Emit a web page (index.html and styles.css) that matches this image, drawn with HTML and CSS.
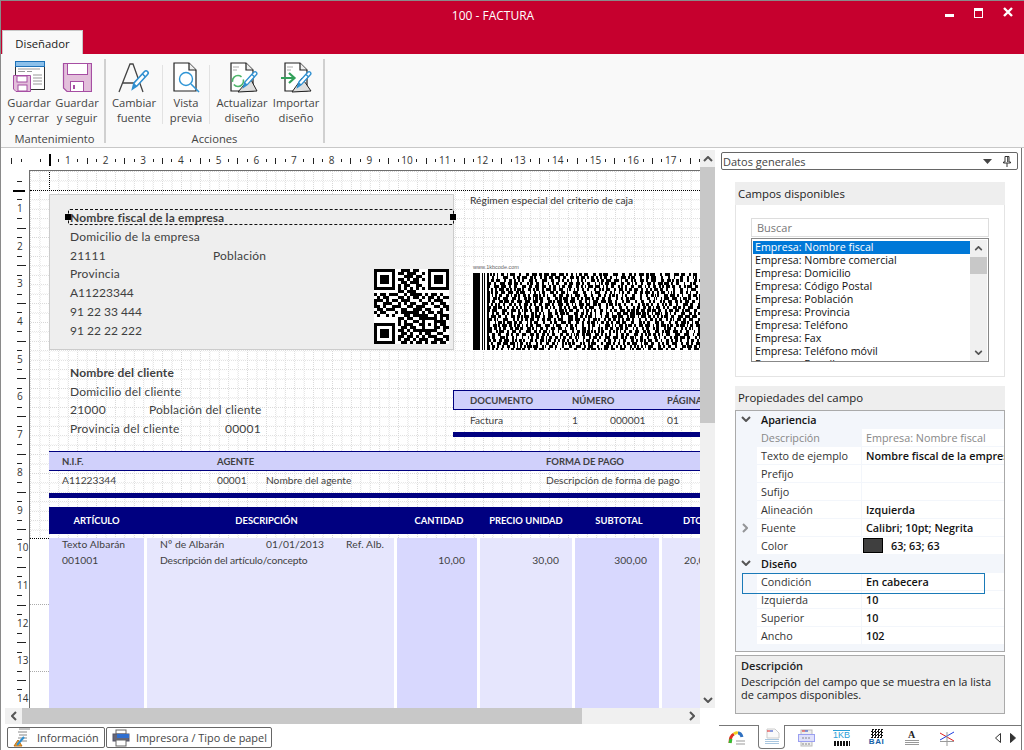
FILE: index.html
```html
<!DOCTYPE html>
<html lang="es">
<head>
<meta charset="utf-8">
<title>100 - FACTURA</title>
<link rel="stylesheet" href="styles.css">
</head>
<body>
<svg class="defs" width="0" height="0" aria-hidden="true">
  <symbol id="pen" viewBox="0 0 20 24">
    <path d="M3 21 L4.5 15 L15 3.5 Q16.5 2 18 3.5 Q19.5 5 18 6.5 L7.5 18 Z" fill="#fff" stroke="#2f8fd0" stroke-width="1.6"/>
    <path d="M13 6 L16 9" stroke="#2f8fd0" stroke-width="1.6"/>
    <path d="M3 21 L4.5 15 L7.5 18 Z" fill="#2f8fd0"/>
  </symbol>
  <symbol id="doc" viewBox="0 0 24 30">
    <path d="M1 1 H16 L23 8 V29 H1 Z" fill="#fff" stroke="#222" stroke-width="1.2"/>
    <path d="M16 1 V8 H23" fill="#eee" stroke="#222" stroke-width="1.2"/>
  </symbol>
  <symbol id="up" viewBox="0 0 10 6"><path d="M1 5 L5 1 L9 5" fill="none" stroke="#555" stroke-width="2"/></symbol>
  <symbol id="down" viewBox="0 0 10 6"><path d="M1 1 L5 5 L9 1" fill="none" stroke="#555" stroke-width="2"/></symbol>
  <symbol id="left" viewBox="0 0 6 10"><path d="M5 1 L1 5 L5 9" fill="none" stroke="#555" stroke-width="2"/></symbol>
  <symbol id="right" viewBox="0 0 6 10"><path d="M1 1 L5 5 L1 9" fill="none" stroke="#555" stroke-width="2"/></symbol>
</svg>

<div class="window">
  <header class="titlebar">
    <div class="title">100 - FACTURA</div>
    <div class="controls">
      <span class="ctl-min"></span>
      <span class="ctl-max"></span>
      <svg class="ctl-close" viewBox="0 0 10 10"><path d="M1 1 L9 9 M9 1 L1 9" stroke="#fff" stroke-width="2.4"/></svg>
    </div>
  </header>
  <div class="tabrow"><div class="tab">Diseñador</div></div>

  <section class="ribbon">
    <div class="group g-mant">
      <div class="buttons">
        <div class="rbtn w48">
          <svg class="ico" width="32" height="32" viewBox="0 0 32 32">
            <rect x="2.500" y=".5" width="29" height="28" fill="#fff" stroke="#333"/>
            <rect x="2.500" y=".5" width="29" height="5" fill="#8cc0ea" stroke="#1f72b8"/>
            <path d="M5 8h22M5 10.500h7M14 10.500h5M20 14h9M20 17h9M20 20h9M20 23h9" stroke="#999"/>
            <path d="M.5 14.500 H17.500 V30.500 H3 L.5 28 Z" fill="#e3bfdb" stroke="#a64ea3"/>
            <rect x="4" y="15" width="10" height="6" fill="#fff" stroke="#a64ea3"/>
            <rect x="5" y="24" width="9" height="6" fill="#fff" stroke="#a64ea3"/>
          </svg>
          <span>Guardar<br>y cerrar</span>
        </div>
        <div class="rbtn w48">
          <svg class="ico" width="30" height="32" viewBox="0 0 30 32">
            <path d="M1.500 2.500 H29.500 V30.500 H5 L1.500 27 Z" fill="#e3bfdb" stroke="#a64ea3" stroke-width="1.2"/>
            <rect x="5.500" y="2.500" width="20" height="11" fill="#fff" stroke="#a64ea3"/>
            <rect x="8.500" y="20.500" width="13" height="10" fill="#fff" stroke="#a64ea3"/>
            <rect x="11" y="24" width="2" height="4" fill="#a64ea3"/>
          </svg>
          <span>Guardar<br>y seguir</span>
        </div>
      </div>
      <div class="glabel">Mantenimiento</div>
    </div>
    <div class="group g-acc">
      <div class="buttons">
        <div class="rbtn w56">
          <svg class="ico" width="36" height="32" viewBox="0 0 36 32">
            <path d="M3 31 L14 3 L17 3 L27 31 M6.500 22 H24" fill="none" stroke="#444" stroke-width="1.3"/>
            <use href="#pen" x="13" y="7" width="21" height="24"/>
          </svg>
          <span>Cambiar<br>fuente</span>
        </div>
        <i class="minisep"></i>
        <div class="rbtn w46">
          <svg class="ico" width="32" height="32" viewBox="0 0 32 32">
            <use href="#doc" x="3" y="1" width="24" height="30"/>
            <circle cx="16" cy="18" r="6.500" fill="#fff" stroke="#2f95d6" stroke-width="1.400"/>
            <path d="M21 23 L29 31" stroke="#2f95d6" stroke-width="1.600"/>
          </svg>
          <span>Vista<br>previa</span>
        </div>
        <i class="minisep"></i>
        <div class="rbtn w62">
          <svg class="ico" width="36" height="32" viewBox="0 0 36 32">
            <use href="#doc" x="6" y="1" width="24" height="30"/>
            <path d="M9 6h6M9 9h4" stroke="#aaa"/>
            <circle cx="14" cy="20" r="5.500" fill="none" stroke="#4fb56b" stroke-width="1.600" stroke-dasharray="13 3"/>
            <path d="M14 31 L26 17 L33 30 Z" fill="#ddd" stroke="#222"/>
            <use href="#pen" x="17" y="8" width="17" height="21"/>
          </svg>
          <span>Actualizar<br>diseño</span>
        </div>
        <div class="rbtn w46">
          <svg class="ico" width="36" height="32" viewBox="0 0 36 32">
            <use href="#doc" x="6" y="1" width="24" height="30"/>
            <path d="M9 6h6M9 9h4" stroke="#aaa"/>
            <path d="M14 31 L24 17 L33 30 Z" fill="#ddd" stroke="#222"/>
            <path d="M3 17 H15 M11 12 L16.500 17 L11 22" fill="none" stroke="#32a05a" stroke-width="2.200"/>
            <use href="#pen" x="17" y="8" width="17" height="21"/>
          </svg>
          <span>Importar<br>diseño</span>
        </div>
      </div>
      <div class="glabel">Acciones</div>
    </div>
  </section>

  <main class="main">
    <section class="designer">
      <div class="sheet">
        <div class="hruler">
          <div class="hcell"></div>
          <div class="hcell origin">1</div>
          <div class="hcell">2</div><div class="hcell">3</div><div class="hcell">4</div><div class="hcell">5</div>
          <div class="hcell">6</div><div class="hcell">7</div><div class="hcell">8</div><div class="hcell">9</div>
          <div class="hcell">10</div><div class="hcell">11</div><div class="hcell">12</div><div class="hcell">13</div>
          <div class="hcell">14</div><div class="hcell">15</div><div class="hcell">16</div><div class="hcell">17</div>
          <div class="hcell"></div>
        </div>
        <div class="vruler">
          <div class="vcell first"></div>
          <div class="vcell origin">1</div>
          <div class="vcell">2</div><div class="vcell">3</div><div class="vcell">4</div><div class="vcell">5</div>
          <div class="vcell">6</div><div class="vcell">7</div><div class="vcell">8</div><div class="vcell">9</div>
          <div class="vcell">10</div><div class="vcell">11</div><div class="vcell">12</div><div class="vcell">13</div>
          <div class="vcell">14</div>
        </div>
        <div class="canvas">
          <i class="dot-h"></i><i class="dot-v"></i><i class="dot-h2"></i>
          <i class="sparse s1"></i><i class="sparse s2"></i>

          <div class="band company">
            <div class="ln b">Nombre fiscal de la empresa</div>
            <div class="ln">Domicilio de la empresa</div>
            <div class="ln"><span class="cp">21111</span>Población</div>
            <div class="ln">Provincia</div>
            <div class="ln digits">A11223344</div>
            <div class="ln digits">91 22 33 444</div>
            <div class="ln digits">91 22 22 222</div>
          </div>
          <div class="selection"></div>
          <i class="handle h1"></i><i class="handle h2"></i>
          <canvas class="qr" id="qr" width="75" height="75"></canvas>

          <div class="band regimen">Régimen especial del criterio de caja</div>
          <div class="band barcode">
            <div class="bc-url">www.1kbcode.com</div>
            <canvas id="pdf" width="227" height="77"></canvas>
          </div>

          <div class="band client">
            <div class="ln b">Nombre del cliente</div>
            <div class="ln">Domicilio del cliente</div>
            <div class="ln"><span class="cp2">21000</span>Población del cliente</div>
            <div class="ln"><span class="cp3">Provincia del cliente</span>00001</div>
          </div>

          <div class="band docs">
            <div class="headbar docgrid"><span>DOCUMENTO</span><span class="sp2">NÚMERO</span><span>PÁGINA</span></div>
            <div class="rowline docgrid"><span>Factura</span><span>1</span><span>000001</span><span>01</span></div>
            <div class="bar"></div>
          </div>

          <div class="band pay">
            <div class="headbar paygrid"><span>N.I.F.</span><span class="sp2">AGENTE</span><span>FORMA DE PAGO</span></div>
            <div class="rowline paygrid"><span>A11223344</span><span>00001</span><span>Nombre del agente</span><span>Descripción de forma de pago</span></div>
            <div class="bar"></div>
          </div>

          <div class="band lines-head tracks">
            <span>ARTÍCULO</span><span class="adj-d">DESCRIPCIÓN</span><span class="adj-r">CANTIDAD</span><span>PRECIO UNIDAD</span><span class="adj-r">SUBTOTAL</span><span class="adj-dto">DTO</span>
          </div>
          <div class="band lines tracks">
            <div class="col dark"><div class="l1">Texto Albarán</div><div>001001</div></div>
            <div class="col light"><div class="alb l1"><span class="a1">Nº de Albarán</span><span class="a2">01/01/2013</span><span>Ref. Alb.</span></div><div class="tight">Descripción del artículo/concepto</div></div>
            <div class="col dark num n1">10,00</div>
            <div class="col light num n2">30,00</div>
            <div class="col dark num n3">300,00</div>
            <div class="col light num n4">20,00</div>
          </div>
        </div>
      </div>

      <div class="vscroll">
        <div class="sb-btn"><svg width="10" height="6"><use href="#up"/></svg></div>
        <div class="sb-thumb-v"></div>
        <div class="sb-track"></div>
        <div class="sb-btn"><svg width="10" height="6"><use href="#down"/></svg></div>
      </div>

      <div class="hscroll">
        <div class="sb-btn h"><svg width="6" height="10"><use href="#left"/></svg></div>
        <div class="sb-thumb-h"></div>
        <div class="sb-track"></div>
        <div class="sb-btn h"><svg width="6" height="10"><use href="#right"/></svg></div>
      </div>

      <div class="bottombtns">
        <div class="bbtn b-info">
          <svg width="18" height="19" viewBox="0 0 18 19">
            <path d="M6 1 H17 M5 4 H14 M6 7 H14 M5 10 H14 M8 13 H14" stroke="#888"/>
            <path d="M1 18 L5 12 L9 18 Z" fill="#f0a030" stroke="#c07010"/>
            <path d="M4 17 L11 9" stroke="#2f8fd0" stroke-width="2"/>
          </svg>
          Información
        </div>
        <div class="bbtn b-print">
          <svg width="18" height="18" viewBox="0 0 18 18">
            <rect x="4" y="1" width="10" height="4" fill="#fff" stroke="#666"/>
            <rect x="1" y="5" width="16" height="7" fill="#667" stroke="#556"/>
            <rect x="5" y="5" width="12" height="4" fill="#2f6fd0"/>
            <rect x="4" y="11" width="10" height="6" fill="#fff" stroke="#666"/>
          </svg>
          Impresora / Tipo de papel
        </div>
      </div>
    </section>

    <aside class="panel">
      <div class="combo">
        <span>Datos generales</span>
        <svg class="c-arrow" width="9" height="5" viewBox="0 0 9 5"><path d="M0 0 H9 L4.500 5 Z" fill="#444"/></svg>
        <svg class="c-pin" width="8" height="11" viewBox="0 0 8 11"><path d="M2 .5 H6 V6 H7.500 V7 H.5 V6 H2 Z M4 7 V11 M4.700 1 V6" fill="none" stroke="#333"/></svg>
      </div>

      <div class="gbox">
        <div class="ghead">Campos disponibles</div>
        <div class="gbody">
          <div class="search">Buscar</div>
          <div class="listbox">
            <ul class="items">
              <li class="sel">Empresa: Nombre fiscal</li>
              <li>Empresa: Nombre comercial</li>
              <li>Empresa: Domicilio</li>
              <li>Empresa: Código Postal</li>
              <li>Empresa: Población</li>
              <li>Empresa: Provincia</li>
              <li>Empresa: Teléfono</li>
              <li>Empresa: Fax</li>
              <li>Empresa: Teléfono móvil</li>
              <li>Empresa: E-mail</li>
            </ul>
            <div class="l-scroll">
              <div class="l-btn"><svg width="9" height="5" viewBox="0 0 10 6"><use href="#up"/></svg></div>
              <div class="l-thumb"></div>
              <div class="l-track"></div>
              <div class="l-btn"><svg width="9" height="5" viewBox="0 0 10 6"><use href="#down"/></svg></div>
            </div>
          </div>
        </div>
      </div>

      <div class="gbox props">
        <div class="ghead tall">Propiedades del campo</div>
        <div class="pgrid">
          <div class="cat"><svg class="chev" width="10" height="6" viewBox="0 0 10 6"><use href="#down"/></svg><b>Apariencia</b></div>
          <div class="prow off"><span>Descripción</span><span>Empresa: Nombre fiscal</span></div>
          <div class="prow"><span>Texto de ejemplo</span><b>Nombre fiscal de la empresa</b></div>
          <div class="prow"><span>Prefijo</span><b></b></div>
          <div class="prow"><span>Sufijo</span><b></b></div>
          <div class="prow"><span>Alineación</span><b>Izquierda</b></div>
          <div class="prow exp"><svg class="chev2" width="6" height="10" viewBox="0 0 6 10"><use href="#right"/></svg><span>Fuente</span><b>Calibri; 10pt; Negrita</b></div>
          <div class="prow"><span>Color</span><b class="swatchline"><i class="swatch"></i>63; 63; 63</b></div>
          <div class="cat"><svg class="chev" width="10" height="6" viewBox="0 0 10 6"><use href="#down"/></svg><b>Diseño</b></div>
          <div class="prow focus"><span>Condición</span><b>En cabecera</b></div>
          <div class="prow"><span>Izquierda</span><b>10</b></div>
          <div class="prow"><span>Superior</span><b>10</b></div>
          <div class="prow"><span>Ancho</span><b>102</b></div>
        </div>
        <div class="desc">
          <b>Descripción</b>
          <p>Descripción del campo que se muestra en la lista de campos disponibles.</p>
        </div>
      </div>

      <div class="tabs">
        <div class="t-ico">
          <svg width="18" height="14" viewBox="0 0 18 14"><path d="M2 12 Q2 5 6 3" stroke="#e03020" stroke-width="3" fill="none"/><path d="M2 12 L3 8" stroke="#30c030" stroke-width="3"/><path d="M6 3 Q8 1 10 2" stroke="#f0d020" stroke-width="3" fill="none"/><path d="M10 2 Q13 2 14 6" stroke="#2f70c0" stroke-width="3" fill="none"/><path d="M8 10 H17 M8 13 H17" stroke="#999"/></svg>
        </div>
        <div class="t-ico active">
          <svg width="16" height="18" viewBox="0 0 16 18"><path d="M3 1 H11 L15 5 V10 H3 Z" fill="#fafafa" stroke="#ccc"/><path d="M3 3 H6" stroke="#e02020"/><path d="M6 3 H9" stroke="#2040c0"/><path d="M1 11.500 H15 M1 13.500 H15 M1 15.500 H15" stroke="#a9c7e0"/></svg>
        </div>
        <div class="t-ico">
          <svg width="17" height="18" viewBox="0 0 17 18"><rect x="3" y="1" width="11" height="16" fill="#eee" stroke="#bbb"/><path d="M4 2 H7" stroke="#e02020"/><path d="M7 2 H10" stroke="#2040c0"/><rect x=".5" y="5.500" width="16" height="7" fill="#dfe0fb" stroke="#9a9ff0"/><path d="M4 9 H13 M4 15 H13" stroke="#888" stroke-dasharray="2 1"/></svg>
        </div>
        <div class="t-ico kb"><span>1KB</span><i></i></div>
        <div class="t-ico bai"><i></i><span>BAI</span></div>
        <div class="t-ico lett"><span>A</span><i></i></div>
        <div class="t-ico">
          <svg width="16" height="16" viewBox="0 0 16 16"><path d="M1 3 L15 11" stroke="#e02020"/><path d="M1 10 L15 2" stroke="#2040e0"/><path d="M8 2 V16 M1 11.500 H15" stroke="#999"/></svg>
        </div>
        <div class="t-nav">
          <svg width="6" height="10" viewBox="0 0 6 10"><path d="M5.500 .5 L.5 5 L5.500 9.500 Z" fill="#fff" stroke="#333"/></svg>
          <svg width="6" height="10" viewBox="0 0 6 10"><path d="M.5 .5 L5.500 5 L.5 9.500 Z" fill="#333" stroke="#333"/></svg>
        </div>
      </div>
    </aside>
  </main>
</div>
<script src="script.js"></script>
</body>
</html>
```

FILE: styles.css
```css
* { box-sizing: border-box; }
html, body { margin: 0; padding: 0; background: #fff; }
body { width: 1024px; height: 750px; overflow: hidden; font-family: "Open Sans", "Noto Sans", sans-serif; color: #222; }
.defs { position: absolute; }
i { display: block; font-style: normal; }

.window { width: 1024px; height: 750px; display: flex; flex-direction: column; border-top: 1px solid #8a8a8a; border-left: 1px solid #8a8a8a; background: #fff; }

.titlebar { height: 29px; background: #c6002e; display: flex; color: #fff; flex: none; }
.title { flex: 1; margin-left: 40px; text-align: center; font-size: 12px; line-height: 29px; }
.controls { width: 79px; display: flex; gap: 20px; padding-top: 6px; align-items: flex-start; }
.ctl-min { width: 9px; height: 3px; background: #fff; margin-top: 7px; }
.ctl-max { width: 9px; height: 10px; border: 1px solid #fff; border-top-width: 3px; margin-top: 1px; }
.ctl-close { width: 10px; height: 10px; }

.tabrow { height: 24px; background: #c6002e; flex: none; padding-left: 1px; }
.tab { width: 81px; height: 24px; background: #f9f9f9; border: 1px solid #c8c8c8; border-bottom: 0; font-size: 11.300px; line-height: 25px; text-align: center; color: #1a1a1a; }

.ribbon { height: 94px; flex: none; background: #f9f9f9; border-bottom: 1px solid #c8c8c8; display: flex; }
.group { display: flex; flex-direction: column; border-right: 2px solid #d0d0d0; margin: 5px 0 4px; }
.g-mant { width: 105px; padding-left: 4px; }
.g-acc { width: 219px; padding-left: 0; }
.buttons { display: flex; flex: 1; }
.rbtn { display: flex; flex-direction: column; align-items: center; text-align: center; font-size: 11.200px; line-height: 15px; color: #444; }
.rbtn span { margin-top: 2px; }
.ico { display: block; height: 32px; margin-top: 2px; flex: none; }
.w48 { width: 48px; }
.w56 { width: 56px; }
.w46 { width: 46px; }
.w62 { width: 62px; margin-left: 1px; }
.minisep { width: 1px; height: 59px; background: #e2e2e2; margin-top: 6px; }
.glabel { text-align: center; font-size: 11.200px; line-height: 14px; color: #444; margin-bottom: -3px; }

.main { flex: 1; display: flex; min-height: 0; }

.designer { width: 717px; flex: none; display: grid; grid-template-columns: 699px 15px; grid-template-rows: 558px 16px 26px; padding-top: 2px; align-content: start; }
.sheet { display: grid; grid-template-columns: 28px 671px; grid-template-rows: 20px 538px; overflow: hidden; }

.hruler { grid-column: 1 / 3; display: flex; padding-left: 10.300px; overflow: hidden; }
.hcell { flex: 0 0 37.700px; height: 20px; font-size: 10px; line-height: 20px; text-align: center; color: #333;
  background:
    linear-gradient(#222, #222) 0 8px / 1px 6px no-repeat,
    linear-gradient(#222, #222) 9.400px 9px / 1px 3px no-repeat,
    linear-gradient(#222, #222) 28.300px 9px / 1px 3px no-repeat; }
.hcell.origin { background:
    linear-gradient(#000, #000) 0 4px / 2px 12px no-repeat,
    linear-gradient(#222, #222) 9.400px 9px / 1px 3px no-repeat,
    linear-gradient(#222, #222) 28.300px 9px / 1px 3px no-repeat; }

.vruler { overflow: hidden; }
.vcell { height: 37.700px; width: 28px; font-size: 10px; line-height: 37.700px; padding-left: 16px; color: #333;
  background:
    linear-gradient(#222, #222) 16px 0 / 9px 1px no-repeat,
    linear-gradient(#222, #222) 16px 9.400px / 5px 1px no-repeat,
    linear-gradient(#222, #222) 16px 28.300px / 5px 1px no-repeat; }
.vcell.first { margin-top: -17.700px; }
.vcell.origin { background:
    linear-gradient(#000, #000) 12px 0 / 12px 2px no-repeat,
    linear-gradient(#222, #222) 16px 9.400px / 5px 1px no-repeat,
    linear-gradient(#222, #222) 16px 28.300px / 5px 1px no-repeat; }

/* the report canvas: origin at page (30,171) */
.canvas { position: relative; overflow: hidden; border-left: 1px solid #6e6e6e; border-top: 1px solid #6e6e6e;
  background:
    linear-gradient(#fff, #fff) 0 367px / 100% 100% no-repeat,
    repeating-conic-gradient(#fff 0 25%, transparent 0 50%) 0 0 / 2px 2px,
    linear-gradient(#d6d6d6 1px, transparent 1px) 0 0 / 9.450px 9.450px,
    linear-gradient(90deg, #d6d6d6 1px, transparent 1px) 0 0 / 9.450px 9.450px,
    #fff;
  font-family: Lato, "Liberation Sans", sans-serif; font-size: 12px; color: #3f3f3f; }

.dot-h { position: absolute; left: 0; right: 0; top: 19px; border-top: 1px dotted #000; }
.dot-v { position: absolute; left: 19px; top: -2px; height: 22px; border-left: 1px dotted #000; }
.dot-h2 { position: absolute; left: 0; width: 19px; top: 367px; border-top: 1px dotted #000; }
.sparse { position: absolute; left: 0; width: 19px; border-top: 1px dotted #aaa; }
.s1 { top: 433px; }
.s2 { top: 500px; }

.band { position: absolute; }
.ln { height: 18.700px; line-height: 18.700px; white-space: nowrap; display: flex; letter-spacing: .2px; }
.ln.b { font-weight: 700; letter-spacing: .15px; }
.ln.digits { letter-spacing: 0; }
.company .ln { height: 18.800px; line-height: 18.800px; }

.company { left: 19px; top: 23px; width: 405px; height: 156px; background: #eee; border: 1px solid #ccc; padding: 14px 0 0 20px; }
.cp { width: 143px; }
.selection { position: absolute; left: 38px; top: 38px; width: 386px; height: 16px; border: 1px dashed #111; border-radius: 2px; }
.handle { position: absolute; width: 6px; height: 6px; background: #000; }
.h1 { left: 35px; top: 43px; }
.h2 { left: 420px; top: 43px; }
.qr { position: absolute; left: 344px; top: 98px; width: 75px; height: 75px; background: #fff; }

.regimen { left: 440px; top: 22px; font-size: 10.200px; line-height: 14px; color: #333; letter-spacing: .05px; white-space: nowrap; }
.barcode { left: 440px; top: 92px; width: 231px; height: 88px; background: #fff; padding-left: 3px; }
.bc-url { font-family: "Liberation Sans", sans-serif; font-size: 5.500px; line-height: 8px; height: 10px; color: #666; }
.barcode canvas { display: block; }

.client { left: 40px; top: 193px; white-space: nowrap; }
.cp2 { width: 79px; }
.cp3 { width: 155px; }

.docs { left: 423px; top: 219px; width: 247px; }
.pay { left: 19px; top: 280px; width: 651px; }
.headbar { height: 20px; background: #d0d0fb; border-top: 1px solid #000080; border-bottom: 1px solid #000080; font-size: 9.500px; font-weight: 700; line-height: 19px; color: #3f3f3f; white-space: nowrap; }
.docs .headbar { border-left: 1px solid #000080; }
.rowline { height: 22px; font-size: 10.200px; line-height: 20px; white-space: nowrap; }
.pay .rowline { line-height: 18px; }
.bar { height: 5px; background: #000080; }
.docgrid { display: grid; grid-template-columns: 102px 38px 57px 1fr; padding-left: 17px; }
.docs .headbar { padding-left: 16px; }
.paygrid { display: grid; grid-template-columns: 155px 49px 280px 1fr; padding-left: 13px; }
.sp2 { grid-column: span 2; }

.tracks { display: grid; grid-template-columns: 95px 247px 80px 92px 84px 60px; column-gap: 3px; left: 19px; width: 680px; }
.lines-head { top: 336px; height: 27px; width: 651px; background: #000080; color: #fff; font-size: 9.400px; font-weight: 700; line-height: 27px; text-align: center; white-space: nowrap; overflow: hidden; }
.adj-d { padding-right: 8px; }
.adj-r { padding-left: 4px; }
.adj-dto { padding-left: 2px; }
.lines { top: 367px; height: 170px; font-size: 10.300px; line-height: 15px; letter-spacing: .1px; white-space: nowrap; }
.col { padding-left: 13px; height: 170px; overflow: hidden; }
.l1 { height: 15px; line-height: 13px; }
.dark { background: #d8d8fe; }
.light { background: #e6e6fd; }
.alb { display: flex; }
.a1 { width: 106px; }
.a2 { width: 80px; }
.tight { letter-spacing: -.15px; }
.num { padding: 15px 0 0; text-align: right; }
.n1 { padding-right: 12px; }
.n2 { padding-right: 13px; }
.n3 { padding-right: 12px; }
.n4 { text-align: left; padding-left: 22px; }

.vscroll { display: flex; flex-direction: column; background: #f0f0f0; height: 558px; }
.sb-btn { flex: none; height: 17px; display: flex; align-items: center; justify-content: center; background: #f0f0f0; }
.sb-btn.h { width: 17px; height: 16px; }
.sb-thumb-v { height: 256px; background: #c8c8c8; flex: none; }
.sb-track { flex: 1; background: #f0f0f0; }
.hscroll { display: flex; margin-left: 4px; width: 695px; background: #f0f0f0; }
.sb-thumb-h { width: 560px; background: #c8c8c8; flex: none; }

.bottombtns { grid-column: 1 / 3; display: flex; gap: 1px; padding: 3px 0 0 6px; }
.bbtn { height: 21px; border: 1px solid #666; border-radius: 2px; display: flex; align-items: center; gap: 6px; font-size: 10.900px; color: #444; background: #fff; padding-left: 5px; white-space: nowrap; }
.b-info { width: 98px; }
.b-print { width: 166px; }

.panel { width: 304px; flex: none; display: flex; flex-direction: column; border-right: 1px solid #777; padding-top: 4px; font-size: 11px; margin-right: 2px; }
.combo { height: 18px; margin: 0 3px; border: 1px solid #666; border-radius: 2px; display: flex; align-items: center; padding-left: 1px; color: #444; font-size: 11px; flex: none; }
.combo span { flex: 1; }
.c-arrow { margin-right: 11px; }
.c-pin { margin-right: 6px; }

.gbox { margin: 12px 16px 0 17px; flex: none; }
.ghead { height: 23px; background: #eee; padding-left: 3px; font-size: 11.400px; line-height: 23px; color: #222; }
.ghead.tall { height: 24px; line-height: 23px; }
.gbody { height: 172px; border: 1px solid #e4e4e4; border-top: 0; padding: 13px 15px 0 15px; }
.search { height: 19px; border: 1px solid #ddd; padding-left: 5px; line-height: 18px; color: #777; font-size: 11px; }
.listbox { height: 124px; margin-top: 1px; border: 1px solid #888; padding: 2px 1px 0; display: flex; overflow: hidden; }
.items { list-style: none; margin: 0; padding: 0; flex: 1; overflow: hidden; font-size: 10.700px; line-height: 13px; color: #111; }
.items li { padding-left: 2px; height: 13px; white-space: nowrap; }
.items li.sel { background: #0078d7; color: #fff; }
.l-scroll { width: 17px; flex: none; background: #f0f0f0; display: flex; flex-direction: column; margin-top: -1px; }
.l-btn { height: 17px; flex: none; display: flex; align-items: center; justify-content: center; }
.l-thumb { height: 17px; background: #c8c8c8; flex: none; }
.l-track { flex: 1; }

.props { margin-top: 9px; }
.pgrid { height: 242px; border: 1px solid #aaa; background: #f3f6fb; overflow: hidden; }
.cat { height: 18px; position: relative; padding-left: 25px; line-height: 18px; font-size: 10.800px; color: #111; }
.cat b { font-weight: 600; }
.chev { position: absolute; left: 5px; top: 5px; }
.prow { height: 18px; margin-left: 21px; display: grid; grid-template-columns: 104px 1fr; background: #fff; border-bottom: 1px solid #f3f6fb; position: relative; font-size: 10.800px; line-height: 17px; color: #333; white-space: nowrap; overflow: visible; }
.prow > span:first-of-type { padding-left: 4px; background: #fff; }
.prow > b, .prow > span:last-child { padding-left: 4px; border-left: 1px solid #f3f6fb; font-weight: 600; color: #111; overflow: hidden; }
.prow.off > span { color: #888; font-weight: 400; }
.prow.off { background: #f3f6fb; }
.prow.off > span:first-of-type { background: #f3f6fb; }
.prow.off > span:last-child { background: #fff; }
.exp .chev2 { position: absolute; left: -15px; top: 4px; opacity: .6; }
.swatchline { display: flex; align-items: center; padding-left: 1px !important; }
.swatch { width: 20px; height: 15px; background: #3f3f3f; border: 1px solid #000; margin-right: 8px; }
.focus { z-index: 1; }
.focus::after { content: ""; position: absolute; left: -15px; top: 0; width: 241px; height: 19px; border: 1px solid #1a7ab8; }

.desc { margin-top: 3px; height: 59px; border: 1px solid #aaa; background: #eee; padding: 3px 5px; font-size: 11px; line-height: 13px; color: #222; }
.desc b { font-weight: 600; display: block; height: 16px; line-height: 14px; }
.desc p { margin: 0; }

.tabs { margin-top: 11px; height: 25px; border-top: 1px solid #777; margin-left: 1px; display: flex; align-items: flex-start; position: relative; }
.t-ico { width: 35px; height: 23px; display: flex; align-items: center; justify-content: center; flex: none; flex-direction: column; }
.t-ico.active { width: 27px; margin: -1px 4px 0; height: 24px; border: 1px solid #777; border-top: 0; border-radius: 0 0 4px 4px; background: #fff; }
.kb span { font-family: "Liberation Sans", sans-serif; font-size: 9px; line-height: 9px; color: #2aa0d8; border-top: 1px solid #2aa0d8; }
.kb i { width: 16px; height: 5px; margin-top: 1px; background: repeating-linear-gradient(90deg, #111 0 2px, #fff 2px 3px); }
.bai i { width: 12px; height: 9px; background: conic-gradient(#111 25%, #fff 0 50%, #111 0 75%, #fff 0) 0 0 / 3px 3px; }
.bai span { font-family: "Liberation Sans", sans-serif; font-size: 8px; font-weight: 700; line-height: 8px; color: #1560a8; letter-spacing: .5px; }
.lett span { font-family: "Liberation Serif", serif; font-weight: 700; font-size: 10px; line-height: 10px; color: #222; }
.lett i { width: 14px; height: 5px; background: repeating-linear-gradient(#999 0 1px, #fff 1px 2px); }
.t-nav { display: flex; gap: 9px; padding-top: 7px; margin-left: 31px; }
```

FILE: script.js
```js
(function () {
  var rows = [
    "1111111001110110001111111",
    "1000001011011100101000001",
    "1011101000111011001011101",
    "1011101011010110101011101",
    "1011101001101110001011101",
    "1000001010110011001000001",
    "1111111010101010101111111",
    "0000000011011100000000000",
    "1011011100101111010110100",
    "0101100011010110101101011",
    "1110101101110001001011100",
    "1001110010101100110100110",
    "1101001110011011100011011",
    "0110111001100111011000101",
    "1011000101111110101101100",
    "0100101000110111110010111",
    "0000000011011001111110101",
    "0000000010100110100011110",
    "1111111010111001101010110",
    "1000001001101100100011011",
    "1011101011010111111110010",
    "1011101001101001011001100",
    "1011101011011010101110011",
    "1000001010110101110011101",
    "1111111001101011010110110"
  ];
  var q = document.getElementById("qr").getContext("2d");
  q.fillStyle = "#fff";
  q.fillRect(0, 0, 75, 75);
  q.fillStyle = "#000";
  rows.forEach(function (r, y) {
    for (var x = 0; x < r.length; x++) {
      if (r[x] === "1") q.fillRect(x * 3, y * 3, 3, 3);
    }
  });

  var seed = 417;
  function rnd() {
    seed = (seed * 1664525 + 1013904223) % 4294967296;
    return seed / 4294967296;
  }
  var p = document.getElementById("pdf").getContext("2d");
  p.fillStyle = "#fff";
  p.fillRect(0, 0, 227, 77);
  p.fillStyle = "#000";
  p.fillRect(0, 0, 7, 77);
  p.fillRect(9, 0, 1, 77);
  p.fillRect(11, 0, 1, 77);
  var widths = [1, 2, 2, 2, 3, 3, 4, 5];
  for (var y = 0; y < 77; y += 3) {
    var x = 14, on = true;
    while (x < 227) {
      var w = widths[Math.floor(rnd() * widths.length)];
      if (on) p.fillRect(x, y, w, 3);
      x += w;
      on = !on;
    }
  }
})();
```
